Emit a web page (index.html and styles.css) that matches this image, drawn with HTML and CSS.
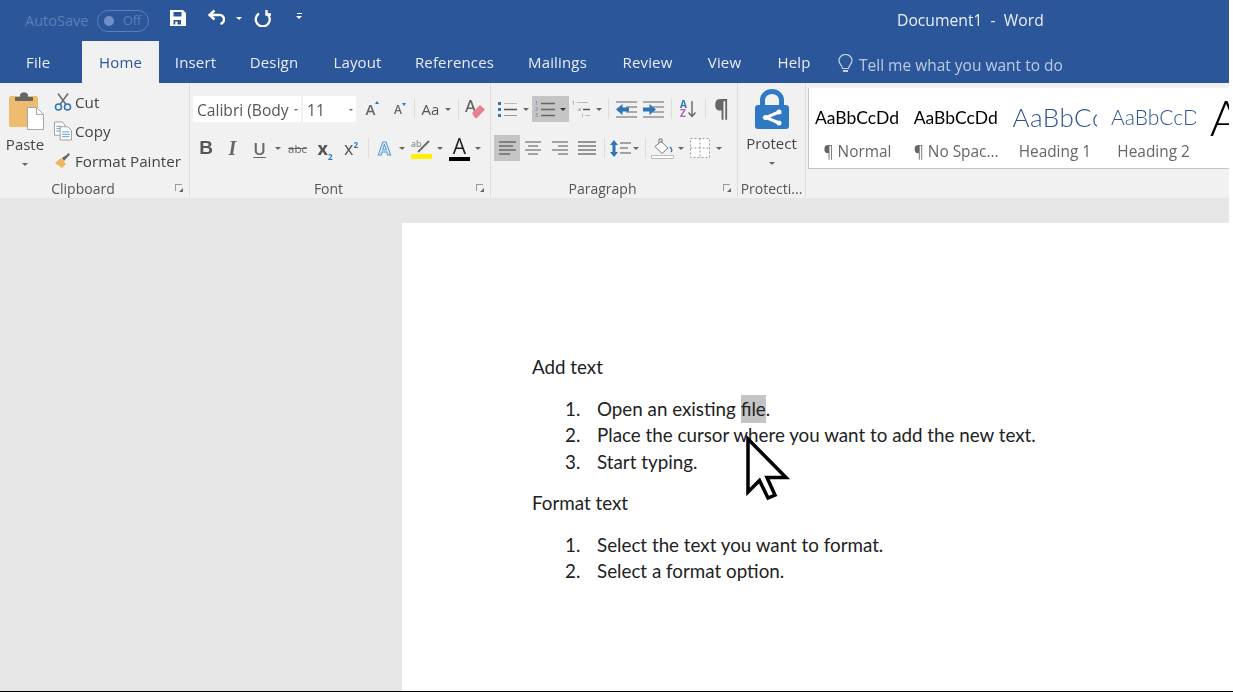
FILE: index.html
```html
<!DOCTYPE html>
<html lang="en">
<head>
  <meta charset="UTF-8">
  <title>Document1 - Word</title>
  <link rel="stylesheet" href="styles.css">
</head>
<body>
  <div class="app">
    <!-- title bar -->
    <div class="titlebar">
      <span class="autosave">AutoSave</span>
      <span class="toggle"><i class="toggle-dot"></i><span>Off</span></span>
      <svg class="qat-save" width="16" height="16" viewBox="0 0 16 16"><path fill="#fff" fill-rule="evenodd" d="M0 0h13l3 3v13H0zM3.500 2v4.500h8V2zM3.500 10v4.500h1.800v-3h2.200v3h3.500V10z"/></svg>
      <svg class="qat-undo" width="18" height="17" viewBox="0 0 18 17"><path fill="none" stroke="#fff" stroke-width="2.400" d="M7.500 1.500 2.500 6l5 4.500M3 6h8.500a4.500 4.500 0 0 1 2 8.800"/></svg>
      <i class="caret caret-white qat-caret1"></i>
      <svg class="qat-redo" width="18" height="18" viewBox="0 0 18 18"><path fill="none" stroke="#fff" stroke-width="2.300" d="M6 4.500a7 7 0 1 0 7.500 0M13.500 1v4.500H18"/></svg>
      <span class="qat-more"><b></b><i class="caret caret-white"></i></span>
      <span class="doc-title">Document1 &nbsp;-&nbsp; Word</span>
    </div>

    <!-- tabs -->
    <div class="tabs">
      <span class="tab tab-file">File</span>
      <span class="tab tab-home">Home</span>
      <span class="tab">Insert</span>
      <span class="tab">Design</span>
      <span class="tab">Layout</span>
      <span class="tab">References</span>
      <span class="tab">Mailings</span>
      <span class="tab">Review</span>
      <span class="tab">View</span>
      <span class="tab">Help</span>
      <span class="tell">
        <svg width="15" height="21" viewBox="0 0 15 21"><path fill="none" stroke="#c5d2e6" stroke-width="1.200" d="M4.500 14.500C4 11 1 10 1 6.500a6.500 6 0 0 1 13 0C14 10 11 11 10.500 14.500z"/><path stroke="#c5d2e6" stroke-width="2" d="M5 17h5"/></svg>
        Tell me what you want to do
      </span>
    </div>

    <!-- ribbon -->
    <div class="ribbon">
      <section class="group group-clipboard">
        <div class="clip-body">
          <div class="paste">
            <svg width="36" height="38" viewBox="0 0 36 38">
              <rect x="1" y="4" width="29" height="31" rx="2" fill="#eebc6f"/>
              <path fill="#666" d="M7 5h5V2.500l2-2h4l2 2V5h5v4H7z"/>
              <path fill="#fff" stroke="#a8a8a8" d="M19.500 15.500h9l7 7v15h-16z"/>
              <path fill="none" stroke="#a8a8a8" d="M28.500 15.500v7h7"/>
            </svg>
            <span class="paste-label">Paste</span>
            <i class="caret"></i>
          </div>
          <div class="clip-list">
            <div class="clip-item">
              <svg width="18" height="19" viewBox="0 0 18 19">
                <path fill="none" stroke="#6d6d6d" stroke-width="1.500" d="M4 1.500l8 11M14 1.500l-8 11"/>
                <circle cx="4.500" cy="15" r="3" fill="none" stroke="#2e75b6" stroke-width="1.500"/>
                <circle cx="13.500" cy="15" r="3" fill="none" stroke="#2e75b6" stroke-width="1.500"/>
              </svg>
              Cut
            </div>
            <div class="clip-item">
              <svg width="19" height="20" viewBox="0 0 19 20">
                <path fill="#fff" stroke="#9a9a9a" d="M.5.500h8l3 3v11H.500z"/>
                <path stroke="#5b9bd5" d="M2.500 5h5M2.500 7.500h5M2.500 10h5"/>
                <path fill="#fff" stroke="#9a9a9a" d="M6.500 5.500h8l4 4v10h-12z"/>
                <path stroke="#5b9bd5" d="M8.500 11h8M8.500 13.500h8M8.500 16h8"/>
              </svg>
              Copy
            </div>
            <div class="clip-item">
              <svg width="18" height="16" viewBox="0 0 18 16">
                <path fill="#eeb461" d="M1 10l6-5 5 6-4 4z"/>
                <path fill="#666" d="M8 5l6-4 1 1.500L10 8zM13 0l3 1-1 2z"/>
              </svg>
              Format Painter
            </div>
          </div>
        </div>
        <div class="group-label">Clipboard</div>
        <i class="launcher"></i>
      </section>

      <section class="group group-font">
        <div class="tool-row font-row1">
          <span class="font-box">Calibri (Body<i class="caret caret-tiny"></i></span>
          <span></span>
          <span class="font-box font-size">11<i class="caret caret-tiny"></i></span>
          <span class="grow-a">A<i class="up"></i></span>
          <span class="grow-a shrink-a">A<i class="down"></i></span>
          <i class="sep"></i>
          <span class="aa">Aa</span>
          <i class="caret"></i>
          <i class="sep"></i>
          <svg width="21" height="21" viewBox="0 0 21 21">
            <path fill="#666" fill-rule="evenodd" d="M4.500 1h2L11 13H9.200L8 10H3l-1.200 3H0zM3.600 8.500h3.800L5.500 3.300z"/>
            <path fill="#e9808f" d="M7 14l8-8 5 4.500-8 8.500H10z"/>
          </svg>
        </div>
        <div class="tool-row font-row2">
          <span class="fmt-b">B</span>
          <span class="fmt-i">I</span>
          <span class="fmt-u">U</span>
          <i class="caret"></i>
          <span class="fmt-s">abc</span>
          <span class="fmt-x">x<sub>2</sub></span>
          <span class="fmt-x fmt-sup">x<sup>2</sup></span>
          <i class="sep"></i>
          <span class="fmt-effect">A</span>
          <i class="caret"></i>
          <svg width="22" height="22" viewBox="0 0 22 22">
            <text x="1" y="10" class="svg-ab">ab</text>
            <path stroke="#6a6a6a" stroke-width="2" d="M8 15 19 4"/>
            <path fill="#ffee00" d="M1 17h21v5H1z"/>
          </svg>
          <i class="caret"></i>
          <span class="color-a">A</span>
          <i class="caret"></i>
        </div>
        <div class="group-label">Font</div>
        <i class="launcher"></i>
      </section>

      <section class="group group-para">
        <div class="tool-row para-row1">
          <svg width="19" height="18" viewBox="0 0 19 18">
            <path fill="#2e75b6" d="M0 2h3v3H0zM0 8h3v3H0zM0 14h3v3H0z"/>
            <path stroke="#bbb" d="M6 3.500h13"/><path stroke="#555" stroke-width="1.500" d="M6 9.500h13"/><path stroke="#999" d="M6 15.500h13"/>
          </svg>
          <i class="caret"></i>
          <span></span>
          <span class="active num-btn">
            <svg width="20" height="18" viewBox="0 0 20 18">
              <text x="0" y="5" class="svg-n">1</text><text x="0" y="11" class="svg-n">2</text><text x="0" y="17" class="svg-n">3</text>
              <path stroke="#666" stroke-width="1.500" d="M6 3.500h14M6 9.500h14M6 15.500h14"/>
            </svg>
            <i class="caret caret-dark"></i>
          </span>
          <svg width="19" height="18" viewBox="0 0 19 18">
            <text x="0" y="5" class="svg-n">1</text><text x="6" y="11" class="svg-n">a</text><text x="10" y="17" class="svg-n">i</text>
            <path stroke="#bbb" d="M5 2.500h11"/><path stroke="#555" stroke-width="1.500" d="M11 9.500h7"/><path stroke="#bbb" d="M13 15.500h5"/>
          </svg>
          <i class="caret"></i>
          <i class="sep"></i>
          <svg width="21" height="17" viewBox="0 0 21 17">
            <path stroke="#aaa" stroke-width="2" d="M0 1h21M10 6h11M10 11h11M0 16h21"/>
            <path fill="#2e75b6" d="M0 8.500 6.500 3v3.500H13v4H6.500V14z"/>
          </svg>
          <svg width="21" height="17" viewBox="0 0 21 17">
            <path stroke="#aaa" stroke-width="2" d="M0 1h21M10 6h11M10 11h11M0 16h21"/>
            <path fill="#2e75b6" d="M13 8.500 6.500 3v3.500H0v4h6.500V14z"/>
          </svg>
          <i class="sep"></i>
          <svg width="16" height="18" viewBox="0 0 16 18">
            <text x="0" y="8" class="svg-sa">A</text><text x="0" y="17" class="svg-sz">Z</text>
            <path fill="none" stroke="#666" stroke-width="1.400" d="M12 1v15M8.500 12.500l3.500 4 3.500-4"/>
          </svg>
          <i class="sep"></i>
          <span class="pilcrow">¶</span>
        </div>
        <div class="tool-row para-row2">
          <span class="active align-btn">
            <svg width="17" height="15" viewBox="0 0 17 15"><path stroke="#6a6a6a" stroke-width="1.600" d="M0 1h17M0 5h14M0 9h17M0 13h11"/></svg>
          </span>
          <svg width="16" height="15" viewBox="0 0 16 15"><path stroke="#888" stroke-width="1.600" d="M0 1h16M3 5h10M0 9h16M3 13h10"/></svg>
          <svg width="16" height="15" viewBox="0 0 16 15"><path stroke="#888" stroke-width="1.600" d="M0 1h16M6 5h10M0 9h16M6 13h10"/></svg>
          <svg width="18" height="15" viewBox="0 0 18 15"><path stroke="#777" stroke-width="1.600" d="M0 1h18M0 5h18M0 9h18M0 13h18"/></svg>
          <i class="sep"></i>
          <svg width="21" height="17" viewBox="0 0 21 17">
            <path fill="#2e75b6" d="M4 0l4 5H5.500v7H8l-4 5-4-5h2.500V5H0z"/>
            <path stroke="#888" stroke-width="1.600" d="M10 3h11M10 8h8M10 13h11"/>
          </svg>
          <i class="caret"></i>
          <i class="sep"></i>
          <svg width="23" height="22" viewBox="0 0 23 22">
            <path fill="#fff" stroke="#777" d="M4 9.500l6-5 7 6.500-6 5.500z"/>
            <path fill="none" stroke="#777" d="M8 6V2h3v4"/>
            <path fill="none" stroke="#2e75b6" stroke-width="1.300" d="M19 10c2 2 2 4 1 5"/>
            <path fill="#fff" stroke="#bbb" d="M.5 18.500h22v3H.500z"/>
          </svg>
          <i class="caret"></i>
          <svg width="20" height="20" viewBox="0 0 20 20"><path fill="#fff" stroke="#999" stroke-dasharray="2 2" d="M.5.500h19v19H.500zM10 .5v19M.5 10h19"/></svg>
          <i class="caret"></i>
        </div>
        <div class="group-label">Paragraph</div>
        <i class="launcher"></i>
      </section>

      <section class="group group-protect">
        <div class="protect">
          <svg width="34" height="40" viewBox="0 0 34 40">
            <path fill="none" stroke="#2f78c4" stroke-width="5" d="M7.500 19V11a9.500 8.500 0 0 1 19 0v8"/>
            <rect y="16" width="34" height="24" rx="3" fill="#2f78c4"/>
            <path fill="none" stroke="#fff" stroke-width="3" d="M24 23l-13 5.500 13 5.500"/>
            <circle cx="10.500" cy="28.500" r="2.500" fill="#fff"/><circle cx="24" cy="23" r="2.500" fill="#fff"/><circle cx="24" cy="34" r="2.500" fill="#fff"/>
          </svg>
          <span class="paste-label">Protect</span>
          <i class="caret"></i>
        </div>
        <div class="group-label group-label-wide">Protecti...</div>
      </section>

      <section class="styles">
        <div class="style-item">
          <div class="preview">AaBbCcDd</div>
          <div class="style-name">¶ Normal</div>
        </div>
        <div class="style-item">
          <div class="preview">AaBbCcDd</div>
          <div class="style-name">¶ No Spac...</div>
        </div>
        <div class="style-item">
          <div class="preview preview-h1">AaBbCc</div>
          <div class="style-name">Heading 1</div>
        </div>
        <div class="style-item">
          <div class="preview preview-h2">AaBbCcD</div>
          <div class="style-name">Heading 2</div>
        </div>
        <div class="style-item">
          <div class="preview preview-title">A</div>
        </div>
      </section>
    </div>

    <!-- document area -->
    <div class="workspace">
      <div class="page">
        <p>Add text</p>
        <ol>
          <li>Open an existing <mark>file</mark>.</li>
          <li>Place the cursor where you want to add the new text.</li>
          <li>Start typing.</li>
        </ol>
        <p>Format text</p>
        <ol>
          <li>Select the text you want to format.</li>
          <li>Select a format option.</li>
        </ol>
      </div>
    </div>
  </div>

  <svg class="pointer" width="46" height="70" viewBox="0 0 46 70">
    <path fill="#fff" stroke="#000" stroke-width="3.500" d="M3 7v53l11.500-11.500 8.500 17.500 7-3-8-17.500h19z"/>
  </svg>
</body>
</html>
```

FILE: styles.css
```css
body {
  margin: 0;
  background: #fff;
  font-family: "Open Sans", "Noto Sans", sans-serif;
  color: #444;
  overflow: hidden;
}

.app {
  width: 1229px;
  height: 691px;
  display: flex;
  flex-direction: column;
  overflow: hidden;
  filter: blur(0.35px);
}

/* black line along the bottom of the window */
body::after {
  content: "";
  position: absolute;
  left: 0;
  right: 0;
  top: 691px;
  height: 1px;
  background: #000;
}

/* title bar */
.titlebar {
  height: 41px;
  flex: none;
  background: #2b579a;
  display: flex;
  align-items: center;
  padding-left: 25px;
  color: #fff;
}

.autosave {
  width: 72px;
  font-size: 14.500px;
  color: #5b7fb8;
}

.toggle {
  width: 52px;
  height: 22px;
  box-sizing: border-box;
  border: 1px solid #5b7fb8;
  border-radius: 11px;
  display: flex;
  align-items: center;
  padding-left: 6px;
  font-size: 12.500px;
  color: #5b7fb8;
}

.toggle-dot {
  width: 10px;
  height: 10px;
  border-radius: 50%;
  background: #6f90c4;
  margin-right: 9px;
}

.qat-save { margin: -6px 0 0 21px; }
.qat-undo { margin: -7px 0 0 21px; }
.qat-caret1 { margin: -5px 0 0 11px; }
.qat-redo { margin: -6px 0 0 11px; }

.qat-more {
  margin: -9px 0 0 25px;
  display: flex;
  flex-direction: column;
  align-items: center;
  gap: 2px;
}

.qat-more b {
  width: 5px;
  height: 1px;
  background: #fff;
}

.doc-title {
  margin-left: 595px;
  margin-top: -1px;
  font-size: 15.700px;
  color: #e9eef6;
  white-space: nowrap;
}

/* tabs */
.tabs {
  height: 42px;
  flex: none;
  background: #2b579a;
  display: grid;
  grid-template-columns: 82px 77px 73px 84px 83px 111px 95px 85px 69px 70px auto;
  color: #e6ecf5;
  font-size: 15px;
  letter-spacing: 0.15px;
}

.tab {
  line-height: 43px;
  text-align: center;
  white-space: nowrap;
}

.tab-file {
  text-align: left;
  padding-left: 26px;
}

.tab-home {
  background: #f1f1f1;
  color: #2b579a;
}

.tell {
  margin-left: 9px;
  padding-top: 4px;
  display: flex;
  align-items: center;
  gap: 6px;
  color: #bccbe3;
  font-size: 15.500px;
  letter-spacing: 0;
  white-space: nowrap;
}

/* ribbon */
.ribbon {
  height: 115px;
  flex: none;
  background: #f1f1f1;
  display: flex;
}

.group {
  position: relative;
  box-sizing: border-box;
  border-right: 1px solid #dcdcdc;
  margin-bottom: 1px;
}

.group-clipboard { width: 190px; }
.group-font { width: 301px; padding: 13px 0 0 2px; }
.group-para { width: 247px; padding: 13px 0 0 2px; }
.group-protect { width: 68px; }

.group-label {
  position: absolute;
  left: 0;
  right: 23px;
  bottom: -1px;
  text-align: center;
  font-size: 14px;
  line-height: 18px;
  color: #555;
  white-space: nowrap;
}

.group-label-wide { right: 0; }

.launcher {
  position: absolute;
  right: 7px;
  bottom: 6px;
  width: 6px;
  height: 6px;
  border-left: 1px solid #999;
  border-top: 1px solid #999;
}

.launcher::after {
  content: "";
  position: absolute;
  right: -1px;
  bottom: -1px;
  border-style: solid;
  border-width: 0 0 4px 4px;
  border-color: transparent transparent #666 transparent;
}

.caret {
  display: block;
  width: 0;
  height: 0;
  border-style: solid;
  border-width: 3px 3px 0;
  border-color: #666 transparent transparent;
}

.caret-white { border-top-color: #fff; }
.caret-dark { border-top-color: #333; }
.caret-tiny { border-width: 2.500px 2.500px 0; }

.sep {
  display: block;
  width: 1px;
  height: 20px;
  background: #dcdcdc;
}

/* clipboard */
.clip-body {
  display: flex;
}

.paste {
  width: 50px;
  padding-top: 9px;
  display: flex;
  flex-direction: column;
  align-items: center;
}

.paste svg { margin-left: 2px; }

.paste-label {
  font-size: 15px;
  line-height: 20px;
  margin-top: 4px;
  margin-bottom: 9px;
  color: #444;
}

.clip-list {
  padding: 4px 0 0 4px;
}

.clip-item {
  height: 29.500px;
  display: flex;
  align-items: center;
  font-size: 15.200px;
  color: #444;
  white-space: nowrap;
}

.clip-item svg {
  width: 18px;
  margin-right: 3px;
}

/* font and paragraph rows */
.tool-row {
  display: grid;
  height: 26px;
  align-items: center;
  justify-items: center;
  margin-left: 1px;
}

.tool-row + .tool-row { margin-top: 13px; }
.tool-row svg { overflow: visible; }

.font-row1 { grid-template-columns: 108px 2px 53px 29px 26px 6px 27px 8px 12px 23px; }
.font-row2 { grid-template-columns: 26px 27px 27px 10px 29px 26px 26px 8px 25px 10px 28px 10px 29px 8px; }
.para-row1 { grid-template-columns: 27px 10px 1px 37px 25px 10px 9px 26px 28px 8px 26px 8px 25px; }
.para-row2 { grid-template-columns: 26px 26px 27px 27px 8px 24px 8px 10px 25px 12px 26px 12px; }

.font-box {
  justify-self: stretch;
  height: 26px;
  background: #fff;
  display: flex;
  align-items: center;
  justify-content: space-between;
  padding: 1px 3px 0 4px;
  font-size: 15.600px;
  color: #555;
  white-space: nowrap;
  box-sizing: border-box;
}

.grow-a {
  position: relative;
  font-size: 15px;
  font-weight: 600;
  color: #666;
}

.shrink-a { font-size: 12px; }

.grow-a i {
  position: absolute;
  right: -4px;
  top: 2px;
  border-style: solid;
  border-color: transparent;
}

.grow-a .up { border-width: 0 2.500px 3px; border-bottom-color: #2e75b6; }
.grow-a .down { border-width: 3px 2.500px 0; border-top-color: #2e75b6; }

.aa {
  font-size: 15px;
  color: #555;
}

.fmt-b { font: bold 19px "Liberation Sans", sans-serif; color: #555; }
.fmt-i { font: italic bold 20px "Liberation Serif", serif; color: #666; }
.fmt-u { font-size: 17px; font-weight: 600; color: #666; text-decoration: underline; text-underline-offset: 2px; }
.fmt-s { font-size: 11.500px; color: #666; text-decoration: line-through; }
.fmt-x { font-size: 18px; font-weight: 700; color: #555; line-height: 20px; }
.fmt-sup { font-weight: 400; }
.fmt-x sub, .fmt-x sup { font-size: 8px; color: #2e75b6; font-weight: 700; line-height: 0; }
.fmt-effect { font-size: 18px; color: #dce9f6; font-weight: 700; -webkit-text-stroke: 1px #5b9bd5; }

.color-a {
  font-size: 21px;
  line-height: 20px;
  color: #222;
  border-bottom: 4px solid #000;
  height: 21px;
  width: 21px;
  text-align: center;
}

.pilcrow {
  font-size: 23px;
  line-height: 22px;
  font-weight: 700;
  color: #666;
  margin-top: -3px;
}

.svg-ab { font: 9px "Open Sans", sans-serif; fill: #777; }
.svg-n { font: 5.500px "Open Sans", sans-serif; fill: #5b7fb8; }
.svg-sa { font: bold 10px "Open Sans", sans-serif; fill: #2e75b6; }
.svg-sz { font: bold 10px "Open Sans", sans-serif; fill: #b25fc0; }

.active {
  background: #c5c5c5;
  height: 26px;
  display: flex;
  align-items: center;
  justify-content: center;
}

.num-btn { width: 37px; gap: 5px; }
.align-btn { width: 26px; }

/* protect */
.protect {
  display: flex;
  flex-direction: column;
  align-items: center;
  padding-top: 6px;
}

/* styles gallery */
.styles {
  margin: 5px 0 29px 2px;
  flex: 1;
  background: #fff;
  border-left: 1px solid #c6c6c6;
  border-bottom: 1px solid #c6c6c6;
  display: grid;
  grid-template-columns: repeat(5, 98.700px);
  padding-left: 6px;
  overflow: hidden;
  color: #000;
}

.style-item {
  width: 85px;
}

.preview {
  height: 52px;
  padding-top: 1px;
  line-height: 58px;
  font-family: "Lato", sans-serif;
  font-size: 17.500px;
  white-space: nowrap;
  overflow: hidden;
}

.preview-h1 {
  font-size: 26px;
  font-weight: 300;
  line-height: 56px;
  color: #2f5496;
  letter-spacing: 0.5px;
}

.preview-h2 {
  font-size: 21px;
  font-weight: 300;
  line-height: 56px;
  color: #2f5496;
}

.preview-title {
  font-size: 50px;
  font-weight: 300;
  line-height: 42px;
  padding-top: 8px;
  height: 45px;
  overflow: visible;
}

.style-name {
  text-align: center;
  font-size: 15.400px;
  color: #666;
  white-space: nowrap;
}

/* document area */
.workspace {
  flex: 1;
  background: #e6e6e6;
  padding: 25px 0 0 402px;
  box-sizing: border-box;
  min-height: 0;
}

.page {
  height: 100%;
  background: #fff;
  padding: 131px 0 0 130px;
  box-sizing: border-box;
  font-family: "Lato", "Open Sans", sans-serif;
  font-size: 18.800px;
  line-height: 26.400px;
  color: #222;
}

.page p {
  margin: 0;
}

.page ol {
  margin: 15.500px 0 14.500px;
  padding: 0 0 0 33px;
  list-style: none;
  counter-reset: step;
}

.page li {
  counter-increment: step;
}

.page li::before {
  content: counter(step) ".";
  display: inline-block;
  width: 32px;
}

mark {
  background: #c4c4c4;
  color: inherit;
  padding: 2px 0 3px;
}

.pointer {
  position: absolute;
  left: 745px;
  top: 432px;
}
```
